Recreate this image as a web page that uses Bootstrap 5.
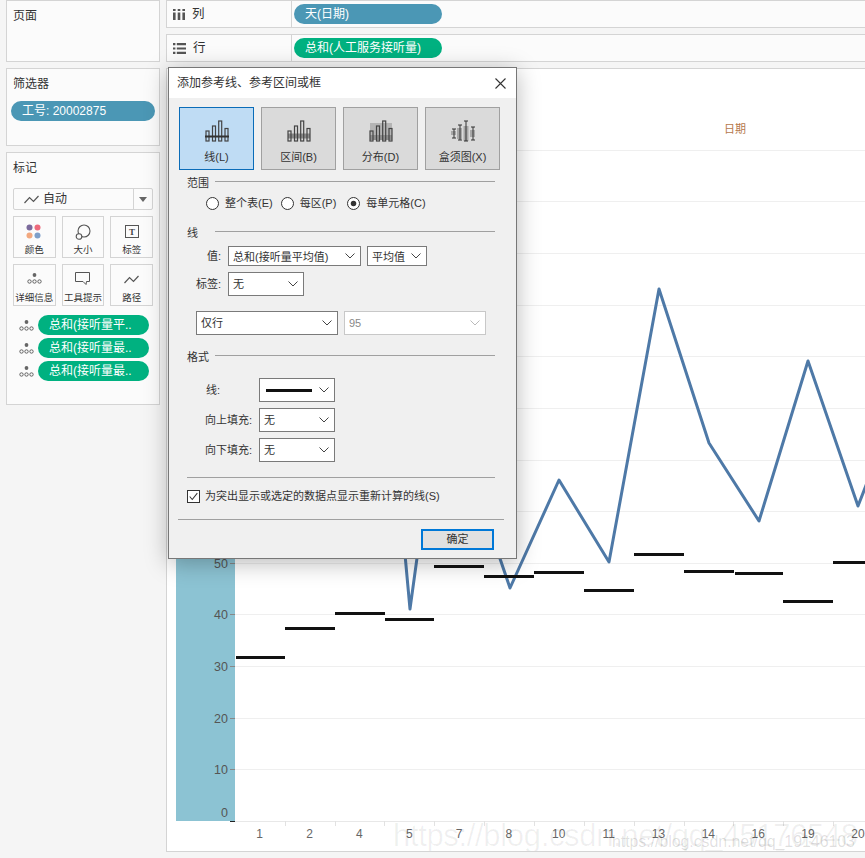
<!DOCTYPE html>
<html lang="zh-CN">
<head>
    <meta charset="UTF-8">
    <meta name="viewport" content="width=device-width, initial-scale=1.0">
    <title>添加参考线、参考区间或框</title>
    <link href="https://cdn.jsdelivr.net/npm/bootstrap@5.3.2/dist/css/bootstrap.min.css" rel="stylesheet">
    <style>
        html, body { height: 858px; overflow: hidden; }
        body {
            background: #f5f5f5;
            color: #333;
            font-family: "Liberation Sans", "Noto Sans CJK SC", sans-serif;
            font-size: 12px;
            padding-left: 6px;
            gap: 6px;
        }
        .side-col { width: 154px; flex: none; gap: 6px; }
        .main-col { width: 700px; flex: none; gap: 6px; }
        .tb-panel { background: #fbfbfb; border: 1px solid #d4d4d4; padding: 7px 6px 0; }
        .tb-title { line-height: 16px; }
        .tb-pill { height: 20px; border-radius: 10px; color: #fff; line-height: 20px; padding-left: 11px; white-space: nowrap; }
        .pill-blue { background: #4b97b5; }
        .pill-green { background: #00b180; }
        .filter-pill { width: 144px; margin: 9px 0 0 -2px; }
        .mark-type { height: 22px; border: 1px solid #d4d4d4; border-radius: 2px; background: #fbfbfb; margin: 12px 0 6px; }
        .mark-type-caret { width: 19px; border-left: 1px solid #d4d4d4; }
        .mark-grid { display: grid; grid-template-columns: repeat(3, minmax(0, 1fr)); gap: 6px; }
        .mark-cell { height: 42px; border: 1px solid #d4d4d4; font-size: 9.5px; line-height: 14px; white-space: nowrap; }
        .mark-rows { margin: 9px 0 0 6px; gap: 3px; }
        .mark-rows .tb-pill { width: 111px; }
        .shelf { height: 28px; background: #fbfbfb; border: 1px solid #d4d4d4; border-right: 0; }
        .shelf-label { width: 125px; border-right: 1px solid #d4d4d4; padding-left: 6px; gap: 7px; font-size: 12.5px; }
        .shelf .tb-pill { width: 148px; margin-left: 2px; }
        .chart-box { height: 784px; background: #fff; border: 1px solid #d4d4d4; border-right: 0; }
        .chart-box svg { display: block; }

        .ref-dialog {
            position: absolute; left: 168px; top: 67px; width: 349px; height: 492px;
            background: #f0f0f0; border: 1px solid #777;
            box-shadow: 0 4px 22px rgba(0, 0, 0, .28);
            font-size: 11px; color: #333; z-index: 5;
        }
        .dlg-head { height: 30px; background: #fff; padding: 0 10px 0 8px; font-size: 12px; }
        .dlg-body { padding: 9px 10px 0; }
        .dlg-tabs { gap: 7px; }
        .dlg-tab { width: 75px; height: 63px; background: #dadada; border: 1px solid #a0a0a0; padding-top: 12px; gap: 8px; line-height: 15px; }
        .dlg-tab.is-on { background: #bfdcf4; border-color: #0a6cb8; }
        .dlg-sect { width: 308px; height: 14px; margin-left: 8px; line-height: 14px; gap: 6px; }
        .dlg-rule { flex: 1; border-top: 1px solid #a0a0a0; margin-top: -3px; }
        .dlg-radios { margin: 6px 0 0 27px; height: 14px; }
        .form-check-input.dlg-radio { width: 13px; height: 13px; margin: 0 6px 0 0; background-color: #fff; border: 1px solid #333; flex: none; }
        .form-check-input.dlg-radio:checked {
            background-color: #fff; border-color: #333;
            --bs-form-check-bg-image: url("data:image/svg+xml,%3csvg xmlns='http://www.w3.org/2000/svg' viewBox='-4 -4 8 8'%3e%3ccircle r='2' fill='%23333'/%3e%3c/svg%3e");
        }
        .form-check-input.dlg-check { width: 13px; height: 13px; margin: 0 5px 0 0; border-radius: 0; background-color: #fff; border: 1px solid #333; flex: none; }
        .form-check-input.dlg-check:checked {
            background-color: #fff; border-color: #333;
            --bs-form-check-bg-image: url("data:image/svg+xml,%3csvg xmlns='http://www.w3.org/2000/svg' viewBox='0 0 13 13'%3e%3cpath fill='none' stroke='%23333' stroke-width='1.2' d='M2 6.5l3 3.5 6-7.5'/%3e%3c/svg%3e");
        }
        .dlg-line { gap: 7px; }
        .dlg-lbl { text-align: right; }
        .dlg-pick {
            border: 1px solid #7a7a7a; border-radius: 0; font-size: 11px; color: #333;
            padding: 0 16px 0 4px; height: 24px; line-height: 20px; min-height: 0;
            background-color: #fff;
            background-image: url("data:image/svg+xml,%3csvg xmlns='http://www.w3.org/2000/svg' viewBox='0 0 10 6'%3e%3cpath fill='none' stroke='%23444' d='M.5 .5L5 5l4.5-4.5'/%3e%3c/svg%3e");
            background-size: 10px 6px; background-position: right 5px center;
        }
        .dlg-pick:disabled {
            border-color: #c8c8c8; color: #888; background-color: #fff;
            background-image: url("data:image/svg+xml,%3csvg xmlns='http://www.w3.org/2000/svg' viewBox='0 0 10 6'%3e%3cpath fill='none' stroke='%23bbb' d='M.5 .5L5 5l4.5-4.5'/%3e%3c/svg%3e");
        }
        .dlg-pick.pick-low { height: 20px; }
        .pick-stroke { width: 46px; height: 3px; background: #111; margin-left: 2px; }
        .dlg-sep { border-top: 1px solid #a0a0a0; }
        .dlg-ok {
            width: 73px; height: 21px; padding: 0; font-size: 11px; line-height: 17px; color: #333;
            background: #e1e1e1; border: 2px solid #0078d7; border-radius: 0;
        }
    </style>
</head>
<body class="d-flex">

<!-- left cards -->
<div class="side-col d-flex flex-column">
    <div class="tb-panel" style="height:62px"><div class="tb-title">页面</div></div>
    <div class="tb-panel" style="height:78px">
        <div class="tb-title">筛选器</div>
        <div class="tb-pill pill-blue filter-pill">工号: 20002875</div>
    </div>
    <div class="tb-panel" style="height:253px">
        <div class="tb-title">标记</div>
        <div class="mark-type d-flex align-items-center justify-content-between">
            <div class="d-flex align-items-center" style="padding-left:10px;gap:4px">
                <svg width="15" height="9" viewBox="0 0 15 9"><path d="M.5 8L5.5 2.5 9.5 6.5 14.5 1" fill="none" stroke="#555" stroke-width="1.2"/></svg>
                <span>自动</span>
            </div>
            <div class="mark-type-caret h-100 d-flex align-items-center justify-content-center">
                <svg width="8" height="5" viewBox="0 0 8 5"><path d="M0 0h8L4 5z" fill="#666"/></svg>
            </div>
        </div>
        <div class="mark-grid">
            <div class="mark-cell d-flex flex-column align-items-center justify-content-end">
                <svg width="16" height="15" viewBox="0 0 16 15" class="mb-1"><circle cx="3.5" cy="3.5" r="3" fill="#7b6a9c"/><circle cx="11.5" cy="3.5" r="3" fill="#ed6a7c"/><circle cx="3.5" cy="11.5" r="3" fill="#f2a87f"/><circle cx="11.5" cy="11.5" r="3" fill="#7e9fc9"/></svg>
                <span>颜色</span>
            </div>
            <div class="mark-cell d-flex flex-column align-items-center justify-content-end">
                <svg width="16" height="16" viewBox="0 0 16 16" style="margin-bottom:3px"><circle cx="9" cy="7" r="6" fill="none" stroke="#555" stroke-width="1.1"/><circle cx="4" cy="12.5" r="2.8" fill="#fbfbfb" stroke="#555" stroke-width="1.1"/></svg>
                <span>大小</span>
            </div>
            <div class="mark-cell d-flex flex-column align-items-center justify-content-end">
                <svg width="14" height="14" viewBox="0 0 14 14" style="margin-bottom:4px"><rect x=".5" y=".5" width="13" height="12" fill="none" stroke="#555"/><text x="7" y="10" text-anchor="middle" font-size="9" font-weight="700" font-family="Liberation Serif" fill="#444">T</text></svg>
                <span>标签</span>
            </div>
            <div class="mark-cell d-flex flex-column align-items-center justify-content-end">
                <svg width="15" height="11" viewBox="0 0 15 11" style="margin-bottom:7px"><circle cx="7.5" cy="2" r="1.9" fill="#666"/><g fill="none" stroke="#555" stroke-width=".9"><circle cx="2.5" cy="8.5" r="1.7"/><circle cx="7.5" cy="8.5" r="1.7"/><circle cx="12.5" cy="8.5" r="1.7"/></g></svg>
                <span>详细信息</span>
            </div>
            <div class="mark-cell d-flex flex-column align-items-center justify-content-end">
                <svg width="15" height="13" viewBox="0 0 15 13" style="margin-bottom:6px"><path d="M.5.5h14v9h-3l-.5 3-3-3H.5z" fill="none" stroke="#555"/></svg>
                <span>工具提示</span>
            </div>
            <div class="mark-cell d-flex flex-column align-items-center justify-content-end">
                <svg width="15" height="9" viewBox="0 0 15 9" style="margin-bottom:7px"><path d="M.5 8L5.5 2.5 9.5 6.5 14.5 1" fill="none" stroke="#555" stroke-width="1.2"/></svg>
                <span>路径</span>
            </div>
        </div>
        <div class="mark-rows d-flex flex-column">
            <div class="d-flex align-items-center gap-1">
                <svg width="15" height="11" viewBox="0 0 15 11"><circle cx="7.5" cy="2" r="1.9" fill="#666"/><g fill="none" stroke="#555" stroke-width=".9"><circle cx="2.5" cy="8.5" r="1.7"/><circle cx="7.5" cy="8.5" r="1.7"/><circle cx="12.5" cy="8.5" r="1.7"/></g></svg>
                <div class="tb-pill pill-green">总和(接听量平..</div>
            </div>
            <div class="d-flex align-items-center gap-1">
                <svg width="15" height="11" viewBox="0 0 15 11"><circle cx="7.5" cy="2" r="1.9" fill="#666"/><g fill="none" stroke="#555" stroke-width=".9"><circle cx="2.5" cy="8.5" r="1.7"/><circle cx="7.5" cy="8.5" r="1.7"/><circle cx="12.5" cy="8.5" r="1.7"/></g></svg>
                <div class="tb-pill pill-green">总和(接听量最..</div>
            </div>
            <div class="d-flex align-items-center gap-1">
                <svg width="15" height="11" viewBox="0 0 15 11"><circle cx="7.5" cy="2" r="1.9" fill="#666"/><g fill="none" stroke="#555" stroke-width=".9"><circle cx="2.5" cy="8.5" r="1.7"/><circle cx="7.5" cy="8.5" r="1.7"/><circle cx="12.5" cy="8.5" r="1.7"/></g></svg>
                <div class="tb-pill pill-green">总和(接听量最..</div>
            </div>
        </div>
    </div>
</div>

<!-- shelves and chart -->
<div class="main-col d-flex flex-column">
    <div class="shelf d-flex align-items-center">
        <div class="shelf-label h-100 d-flex align-items-center">
            <svg width="12" height="11" viewBox="0 0 12 11" fill="#555"><path d="M0 0h2.6v2H0zM0 3.5h2.6V11H0zM4.7 0h2.6v2H4.7zM4.7 3.5h2.6V11H4.7zM9.4 0H12v2H9.4zM9.4 3.5H12V11H9.4z"/></svg>
            <span>列</span>
        </div>
        <div class="tb-pill pill-blue">天(日期)</div>
    </div>
    <div class="shelf d-flex align-items-center">
        <div class="shelf-label h-100 d-flex align-items-center">
            <svg width="13" height="11" viewBox="0 0 13 11" fill="#555"><path d="M0 0h2.4v2.2H0zM3.8 0H13v2.2H3.8zM0 4.4h2.4v2.2H0zM3.8 4.4H13v2.2H3.8zM0 8.8h2.4V11H0zM3.8 8.8H13V11H3.8z"/></svg>
            <span>行</span>
        </div>
        <div class="tb-pill pill-green">总和(人工服务接听量)</div>
    </div>
    <div class="chart-box">
        <svg id="chart" width="699" height="782" viewBox="167 69 699 782" font-family="Liberation Sans, Noto Sans CJK SC, sans-serif"></svg>
    </div>
</div>

<!-- reference line dialog -->
<div class="ref-dialog d-flex flex-column">
    <div class="dlg-head d-flex align-items-center justify-content-between">
        <span>添加参考线、参考区间或框</span>
        <svg width="11" height="11" viewBox="0 0 11 11"><path d="M.5.5l10 10M10.5.5l-10 10" stroke="#333" stroke-width="1.1" fill="none"/></svg>
    </div>
    <div class="dlg-body">
        <div class="dlg-tabs d-flex">
            <div class="dlg-tab is-on d-flex flex-column align-items-center">
                <svg width="24" height="22" viewBox="0 0 24 22"><g fill="none" stroke="#444" stroke-width="1.2"><rect x="1" y="11" width="3" height="10"/><rect x="7.5" y="6" width="3" height="15"/><rect x="13.7" y="1" width="3" height="20"/><rect x="20" y="8.5" width="3" height="12.5"/></g><path d="M0 16.5h24" stroke="#333" stroke-width="2"/></svg>
                <span>线(L)</span>
            </div>
            <div class="dlg-tab d-flex flex-column align-items-center">
                <svg width="24" height="22" viewBox="0 0 24 22"><rect x="1" y="13.5" width="22" height="5" fill="#8a8a8a"/><g fill="none" stroke="#444" stroke-width="1.2"><rect x="1" y="11" width="3" height="10"/><rect x="7.5" y="6" width="3" height="15"/><rect x="13.7" y="1" width="3" height="20"/><rect x="20" y="8.5" width="3" height="12.5"/></g></svg>
                <span>区间(B)</span>
            </div>
            <div class="dlg-tab d-flex flex-column align-items-center">
                <svg width="24" height="22" viewBox="0 0 24 22"><rect x="1" y="3" width="22" height="12" fill="#b4b4b4"/><rect x="1" y="15" width="22" height="5" fill="#8f8f8f"/><g fill="none" stroke="#444" stroke-width="1.2"><rect x="1" y="11" width="3" height="10"/><rect x="7.5" y="6" width="3" height="15"/><rect x="13.7" y="1" width="3" height="20"/><rect x="20" y="8.5" width="3" height="12.5"/></g></svg>
                <span>分布(D)</span>
            </div>
            <div class="dlg-tab d-flex flex-column align-items-center">
                <svg width="24" height="22" viewBox="0 0 24 22"><g fill="#a8a8a8"><rect x="0" y="11" width="5" height="4"/><rect x="6" y="8" width="5" height="11"/><rect x="12.5" y="6" width="5" height="15"/><rect x="19" y="10" width="5" height="7"/></g><path d="M1 9h4M3 9v9M1 18h4M7 5h4M9 5v15M7 20h4M13 1h4M15 1v20M13 21h4M20 7h4M22 7v13M20 20h4" stroke="#333" fill="none"/></svg>
                <span>盒须图(X)</span>
            </div>
        </div>

        <div class="dlg-sect d-flex align-items-center" style="margin-top:6px"><span>范围</span><div class="dlg-rule"></div></div>
        <div class="dlg-radios d-flex align-items-center">
            <input class="form-check-input dlg-radio" type="radio" name="scope">
            <span style="margin-right:8px">整个表(E)</span>
            <input class="form-check-input dlg-radio" type="radio" name="scope">
            <span style="margin-right:11px">每区(P)</span>
            <input class="form-check-input dlg-radio" type="radio" name="scope" checked>
            <span>每单元格(C)</span>
        </div>

        <div class="dlg-sect d-flex align-items-center" style="margin-top:16px"><span>线</span><div class="dlg-rule" style="margin-left:11px"></div></div>
        <div class="dlg-line d-flex align-items-center" style="margin-top:6px">
            <div class="dlg-lbl" style="width:42px">值:</div>
            <select class="form-select dlg-pick pick-low" style="width:133px"><option>总和(接听量平均值)</option></select>
            <select class="form-select dlg-pick pick-low" style="width:60px;margin-left:-1px"><option>平均值</option></select>
        </div>
        <div class="dlg-line d-flex align-items-center" style="margin-top:6px">
            <div class="dlg-lbl" style="width:42px">标签:</div>
            <select class="form-select dlg-pick" style="width:76px"><option>无</option></select>
        </div>
        <div class="d-flex" style="margin:15px 0 0 17px;gap:6px">
            <select class="form-select dlg-pick" style="width:142px"><option>仅行</option></select>
            <select class="form-select dlg-pick" style="width:142px" disabled><option>95</option></select>
        </div>

        <div class="dlg-sect d-flex align-items-center" style="margin-top:15px"><span>格式</span><div class="dlg-rule"></div></div>
        <div class="d-flex flex-column" style="margin-top:14px;gap:6px">
            <div class="dlg-line d-flex align-items-center">
                <div style="width:73px;padding-left:27px">线:</div>
                <div class="form-select dlg-pick d-flex align-items-center" style="width:76px"><div class="pick-stroke"></div></div>
            </div>
            <div class="dlg-line d-flex align-items-center">
                <div class="dlg-lbl" style="width:73px">向上填充:</div>
                <select class="form-select dlg-pick" style="width:76px"><option>无</option></select>
            </div>
            <div class="dlg-line d-flex align-items-center">
                <div class="dlg-lbl" style="width:73px">向下填充:</div>
                <select class="form-select dlg-pick" style="width:76px"><option>无</option></select>
            </div>
        </div>

        <div class="dlg-sep" style="margin:15px 11px 0 8px"></div>
        <div class="d-flex align-items-center" style="margin:10px 0 0 8px">
            <input class="form-check-input dlg-check" type="checkbox" checked>
            <span>为突出显示或选定的数据点显示重新计算的线(S)</span>
        </div>
        <div class="dlg-sep" style="margin:14px 2px 0 -1px"></div>
        <div class="d-flex justify-content-end" style="margin-top:9px;padding-right:12px">
            <button type="button" class="btn dlg-ok">确定</button>
        </div>
    </div>
</div>

<script>
    // chart is drawn in page coordinates, the viewBox of the svg takes care of the offset
    const svg = document.getElementById('chart');
    let out = '<rect x="176" y="69" width="59" height="752" fill="#8cc3d3"/>';

    // gridlines every 10 units
    const gridY = [821, 769, 718, 666, 614, 563, 511, 460, 408, 356, 305, 253, 201, 150];
    gridY.forEach((g, i) => {
        const y = g + .5;
        if (i > 0) out += `<line x1="235" x2="866" y1="${y}" y2="${y}" stroke="#efefef"/>`;
        if (i <= 5) {
            out += `<line x1="230" x2="235" y1="${y}" y2="${y}" stroke="${i ? '#888' : '#222'}"/>`;
            const ty = i ? y + 4.5 : y - 4.5;
            out += `<text x="228" y="${ty}" text-anchor="end" font-size="12.5" fill="#555">${i * 10}</text>`;
        }
    });
    out += '<line x1="235" x2="866" y1="821.5" y2="821.5" stroke="#e8e8e8"/>';
    out += '<text x="735" y="133" text-anchor="middle" font-size="11" fill="#b5784c">日期</text>';

    // days on the x axis
    const days = [1, 2, 4, 5, 7, 8, 10, 11, 13, 14, 16, 19, 20];
    days.forEach((d, i) => {
        const cx = 259.7 + i * 49.85;
        const edge = Math.round(cx + 25) + .5;
        out += `<line x1="${edge}" x2="${edge}" y1="821" y2="826" stroke="#e2e2e2"/>`;
        out += `<text x="${cx}" y="837.5" text-anchor="middle" font-size="12" fill="#666">${d}</text>`;
    });

    // measure line
    out += '<polyline fill="none" stroke="#4e79a7" stroke-width="3" stroke-linejoin="round" points="400,500 410,609 425,500 480,500 510,588 559,480 609,562 659,289 709,443 759,521 808,361 858,506 872,470"/>';

    // reference lines per cell: x1, x2, top
    const refs = [[236,285,656],[285,335,627],[335,385,612],[385,434,618],[434,484,565],[484,534,575],[534,584,571],[584,634,589],[634,684,553],[684,734,570],[735,783,572],[783,833,600],[833,866,561]];
    refs.forEach(r => {
        out += `<rect x="${r[0]}" y="${r[2]}" width="${r[1] - r[0]}" height="3" fill="#111"/>`;
    });

    // blog watermark
    out += '<text x="393" y="846" font-size="31" textLength="465" fill="#000" fill-opacity=".06">https://blog.csdn.net/qq_45176548</text>';
    out += '<text x="612" y="847" font-size="16" textLength="243" fill="#000" fill-opacity=".13">https://blog.csdn.net/qq_19146103</text>';

    svg.innerHTML = out;
</script>
<script src="https://cdn.jsdelivr.net/npm/bootstrap@5.3.2/dist/js/bootstrap.bundle.min.js"></script>
</body>
</html>
